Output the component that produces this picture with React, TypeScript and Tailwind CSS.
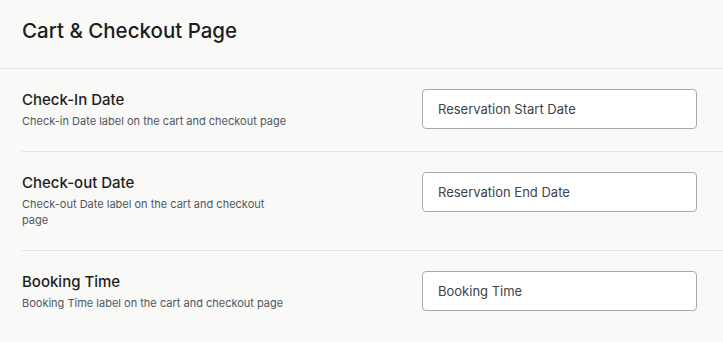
const rows = [
  {
    title: "Check-In Date",
    help: "Check-in Date label on the cart and checkout page",
    value: "Reservation Start Date",
  },
  {
    title: "Check-out Date",
    help: "Check-out Date label on the cart and checkout page",
    value: "Reservation End Date",
  },
  {
    title: "Booking Time",
    help: "Booking Time label on the cart and checkout page",
    value: "Booking Time",
  },
];

export default function App() {
  return (
    <div className="min-h-[342px] w-[723px] bg-[#f9f9f8] font-['Inter',sans-serif] text-[#1e1e1e]">
      <div className="border-b border-[#e2e2e2] px-[22px] pb-[22px] pt-[16px]">
        <h1 className="text-[20.5px] font-medium leading-[30px]">Cart &amp; Checkout Page</h1>
      </div>

      <div className="pl-[22px]">
        {rows.map((row, i) => (
          <div
            key={row.title}
            className={`flex items-start justify-between pb-[22px] pr-[26px] pt-[20px] ${
              i < rows.length - 1 ? "border-b border-[#e2e2e2]" : ""
            }`}
          >
            <div className="max-w-[267px] pt-[1px]">
              <p className="text-[15px] font-medium leading-[20px]">{row.title}</p>
              <p className="mt-[3px] text-[11px] leading-[16px] text-[#50575e]">{row.help}</p>
            </div>
            <input
              type="text"
              defaultValue={row.value}
              className="h-[40px] w-[275px] rounded-[4px] border border-[#a7aaad] bg-white px-[15px] text-[13px] text-[#3c434a] outline-none"
            />
          </div>
        ))}
      </div>
    </div>
  );
}
